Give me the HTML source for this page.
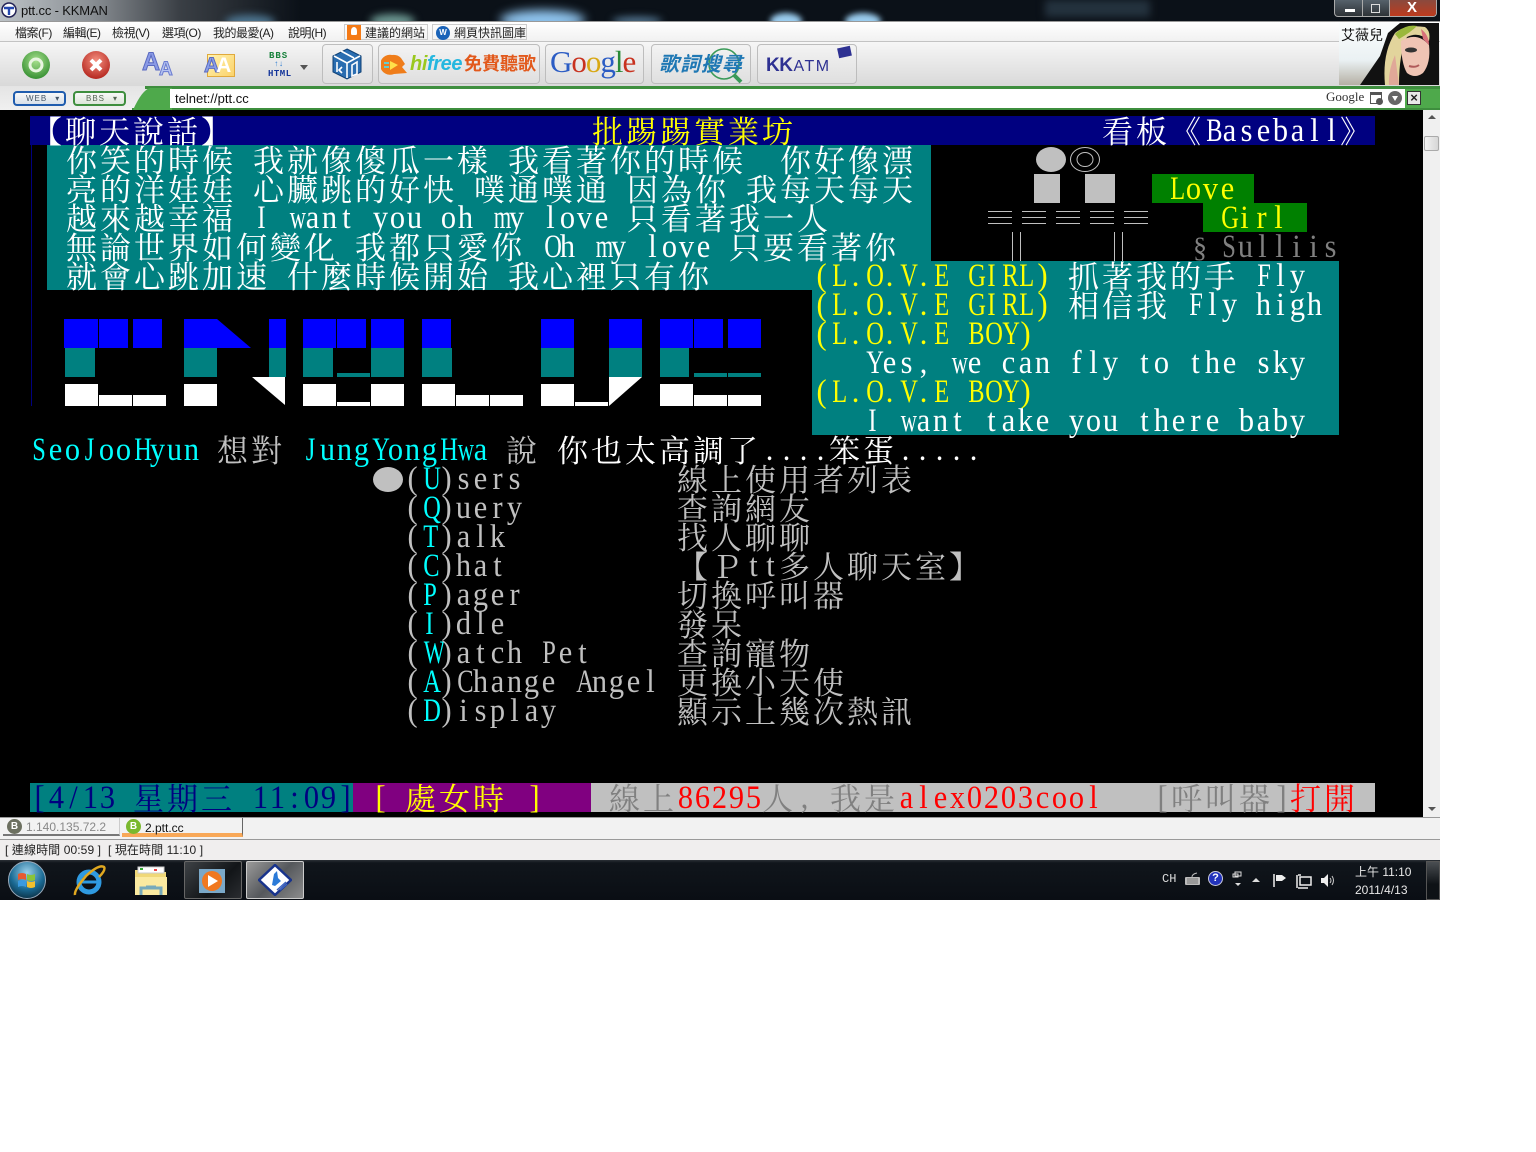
<!DOCTYPE html>
<html><head><meta charset="utf-8"><title>ptt.cc - KKMAN</title>
<style>
html,body{margin:0;padding:0;background:#fff;width:1536px;height:1152px;overflow:hidden}
#a{position:absolute;left:0;top:0;width:1440px;height:900px;overflow:hidden;font-family:"Liberation Sans","Noto Sans CJK TC",sans-serif;font-size:12px;color:#222}
.p{position:absolute}
.t{position:absolute;white-space:nowrap;line-height:16px}
.mn{letter-spacing:-.5px}
.r{position:absolute;white-space:nowrap;height:29px;line-height:29px;margin-top:2px;font-family:"Liberation Serif","Noto Serif CJK SC",serif;font-size:31px;letter-spacing:3px;color:#c0c0c0}
.r i,.r b,.r s,.r u{display:inline-block;position:relative;top:-2px;width:17px;text-align:center;font-style:normal;font-weight:normal;text-decoration:none;letter-spacing:0;font-size:33px;transform:scaleX(.92)}
.r b{transform:scaleX(.68)}
.r u{transform:scaleX(.74)}
.w{color:#fff}.y{color:#ff0}.c{color:#0ff}.d{color:#808080}.n{color:#000080}.e{color:#f00}
.btn{position:absolute;top:44px;height:38px;border:1px solid #bdbdbd;border-radius:4px;background:linear-gradient(#f3f3f3,#dfdfdf)}
.k{position:absolute;top:319px;height:29px;background:#00f}
.m{position:absolute;top:348px;height:29px;background:#008080}
.h{position:absolute;background:#fff}
.tb{position:absolute;top:861px;height:36px;width:56px;border:1px solid #666;border-radius:2px}
</style></head><body><div id="a">

<!-- title bar -->
<div class="p" style="left:0;top:0;width:1440px;height:21px;background:#0b1118;overflow:hidden">
<div class="p" style="left:0;top:0;width:300px;height:21px;background:linear-gradient(90deg,#bcc2c6,#8b9095 30%,#3a3f45 60%,#0b1118)"></div>
<div class="p" style="left:225px;top:15px;width:50px;height:14px;background:#4d7590;border-radius:50%;filter:blur(4px)"></div>
<div class="p" style="left:370px;top:14px;width:45px;height:14px;background:#6b9690;border-radius:50%;filter:blur(4px)"></div>
<div class="p" style="left:500px;top:10px;width:85px;height:20px;background:#8fc4ee;border-radius:50%;filter:blur(5px)"></div>
<div class="p" style="left:612px;top:17px;width:50px;height:8px;background:#5a7f9c;border-radius:50%;filter:blur(4px)"></div>
<div class="p" style="left:770px;top:13px;width:32px;height:16px;background:#9accee;border-radius:50%;filter:blur(3px)"></div>
<div class="p" style="left:845px;top:13px;width:36px;height:16px;background:#9accee;border-radius:50%;filter:blur(3px)"></div>
<div class="p" style="left:1045px;top:0;width:105px;height:17px;background:#24323e;filter:blur(4px)"></div>
</div>
<svg class="p" style="left:1px;top:2px" width="16" height="16" viewBox="0 0 16 16"><circle cx="8" cy="8" r="7" fill="#fff" stroke="#225" stroke-width="1.5"/><path d="M3 6h10M8 5v8" stroke="#2448b0" stroke-width="2.4"/></svg>
<div class="t" style="left:21px;top:3px;color:#111;font-size:13px;letter-spacing:-.15px">ptt.cc - KKMAN</div>
<div class="p" style="left:1334px;top:0;width:103px;height:17px;border:1px solid #aaa;border-top:0;border-radius:0 0 4px 4px;box-sizing:border-box;overflow:hidden;background:linear-gradient(#56616b,#2d3236)">
<div class="p" style="left:55px;top:0;width:47px;height:17px;background:linear-gradient(#8a4a3e,#c03a1c)"></div>
<div class="p" style="left:27px;top:0;width:1px;height:17px;background:#aaa"></div>
<div class="p" style="left:54px;top:0;width:1px;height:17px;background:#aaa"></div>
<div class="p" style="left:10px;top:9px;width:10px;height:3px;background:#fff"></div>
<div class="p" style="left:36px;top:4px;width:7px;height:7px;border:1.5px solid #ddd"></div>
<div class="p" style="left:72px;top:-1px;color:#fff;font-weight:bold;font-size:15px;line-height:17px">X</div>
</div>

<!-- menu bar -->
<div class="p" style="left:0;top:21px;width:1440px;height:21px;background:linear-gradient(#fff,#f1f1f1);border-top:1px solid #999;box-sizing:border-box;border-bottom:1px solid #c3c3c3"></div>
<div class="t mn" style="left:15px;top:25px">檔案(F)</div>
<div class="t mn" style="left:63px;top:25px">編輯(E)</div>
<div class="t mn" style="left:112px;top:25px">檢視(V)</div>
<div class="t mn" style="left:162px;top:25px">選項(O)</div>
<div class="t mn" style="left:213px;top:25px">我的最愛(A)</div>
<div class="t mn" style="left:288px;top:25px">說明(H)</div>
<div class="p" style="left:344px;top:24px;width:84px;height:16px;border:1px solid #ccc;box-sizing:border-box"></div>
<div class="p" style="left:347px;top:25px;width:14px;height:15px;background:#f47a16"></div>
<div class="p" style="left:351px;top:27px;width:6px;height:8px;background:#fff;border-radius:50% 50% 20% 20%"></div>
<div class="t" style="left:365px;top:25px">建議的網站</div>
<div class="p" style="left:432px;top:24px;width:95px;height:16px;border:1px solid #ccc;box-sizing:border-box"></div>
<div class="p" style="left:436px;top:26px;width:14px;height:14px;border-radius:50%;background:#1a63b8;color:#fff;font:bold 8px/14px 'Liberation Sans';text-align:center">W</div>
<div class="t" style="left:454px;top:25px">網頁快訊圖庫</div>

<!-- toolbar -->
<div class="p" style="left:0;top:42px;width:1440px;height:44px;background:linear-gradient(#f6f6f6,#d9d9d9)"></div>
<svg class="p" style="left:20px;top:49px" width="32" height="32"><defs><radialGradient id="gg" cx=".5" cy=".35" r=".7"><stop offset="0" stop-color="#a6e08c"/><stop offset="1" stop-color="#2f8a2c"/></radialGradient><radialGradient id="rr" cx=".5" cy=".35" r=".7"><stop offset="0" stop-color="#f59080"/><stop offset="1" stop-color="#b01f18"/></radialGradient></defs><circle cx="16" cy="16" r="14" fill="url(#gg)"/><circle cx="16" cy="16" r="6" fill="none" stroke="#e8f5e0" stroke-width="3"/></svg>
<svg class="p" style="left:81px;top:49px" width="32" height="32"><circle cx="15" cy="16" r="14" fill="url(#rr)"/><path d="M10 11l10 10M20 11l-10 10" stroke="#fff" stroke-width="4"/></svg>
<div class="t" style="left:142px;top:49px;font:bold 25px 'Liberation Sans';color:#8a9ae6;-webkit-text-stroke:1px #5a6ac0;line-height:26px">A</div>
<div class="t" style="left:159px;top:60px;font:bold 19px 'Liberation Sans';color:#b4c2f0;-webkit-text-stroke:1px #6a7bd0;line-height:20px">A</div>
<div class="p" style="left:207px;top:54px;width:28px;height:23px;background:linear-gradient(135deg,#fff3b0,#fbd26a);border:1px solid #e0a93c;box-sizing:border-box"></div>
<div class="t" style="left:204px;top:54px;font:bold 21px 'Liberation Sans';color:#8aa0e8;-webkit-text-stroke:1px #5a6ac0;line-height:24px">A<span style="color:#fff;-webkit-text-stroke:0;margin-left:-3px">A</span></div>
<div class="t" style="left:269px;top:51px;font:bold 9px 'Liberation Mono';color:#16803a;letter-spacing:1px;line-height:10px">BBS</div>
<div class="t" style="left:274px;top:60px;font:bold 8px 'Liberation Mono';color:#2a7ad0;line-height:9px">↑↓</div>
<div class="t" style="left:268px;top:69px;font:bold 9px 'Liberation Mono';color:#14359a;letter-spacing:.5px;line-height:10px">HTML</div>
<div class="p" style="left:300px;top:65px;width:0;height:0;border:4px solid transparent;border-top:5px solid #555"></div>

<div class="btn" style="left:322px;width:49px"></div>
<svg class="p" style="left:332px;top:48px" width="30" height="32" viewBox="0 0 30 32"><path d="M15 1l14 7v16l-14 7-14-7V8z" fill="#2a6db0" stroke="#0d3f74"/><path d="M15 15L2 8M15 15l13-7M15 15v15M9 3l13 7M5 14v10M10 19l-3 3 3 3M20 17l5-3v12l-5 2z" stroke="#fff" stroke-width="1.6" fill="none"/></svg>
<div class="btn" style="left:378px;width:160px"></div>
<svg class="p" style="left:381px;top:54px" width="27" height="22"><path d="M11 1a10 10 0 1 0 2 19l13-1-5-6 3-3-4-6A10 10 0 0 0 11 1z" fill="#ef7d1a"/><path d="M9 7l8 4-8 5z" fill="#ffe14a"/><path d="M3 9h5M3 13h5" stroke="#6cc" stroke-width="2"/></svg>
<div class="t" style="left:410px;top:51px;font:italic bold 20px 'Liberation Sans';line-height:26px;letter-spacing:-.4px;color:#9ac81e">hi<span style="color:#25b7df">free</span></div>
<div class="t" style="left:464px;top:54px;font:bold 18px 'Liberation Sans','Noto Sans CJK TC';line-height:20px;color:#e2591c">免費聽歌</div>
<div class="btn" style="left:545px;width:97px"></div>
<div class="t" style="left:550px;top:44px;font:31px 'Liberation Serif';line-height:36px;letter-spacing:-1px;color:#2b5cc4">G<span style="color:#c8321f">o</span><span style="color:#d8a814">o</span>g<span style="color:#2a8a38">l</span><span style="color:#c8321f">e</span></div>
<div class="btn" style="left:651px;width:98px"></div>
<svg class="p" style="left:708px;top:47px" width="36" height="37"><circle cx="16" cy="17" r="15" fill="none" stroke="#3a9a58" stroke-width="1.6"/><path d="M26 28l7 7" stroke="#3a9a58" stroke-width="4"/></svg>
<div class="t" style="left:659px;top:53px;font:italic bold 20px 'Liberation Sans','Noto Sans CJK TC';line-height:24px;letter-spacing:1px;color:#1f78b4">歌詞搜尋</div>
<div class="btn" style="left:757px;width:98px"></div>
<div class="t" style="left:766px;top:54px;font:bold 19px 'Liberation Sans';line-height:24px;color:#2e3192;letter-spacing:-.5px">KK<span style="font-size:16px;font-weight:normal;letter-spacing:1.5px;margin-left:1px">ATM</span></div>
<div class="p" style="left:838px;top:47px;width:13px;height:10px;background:#2e3192;transform:rotate(-12deg)"></div>

<!-- avatar -->
<svg class="p" style="left:1339px;top:23px" width="100" height="62" viewBox="0 0 100 62"><defs><linearGradient id="av" x1="0" y1="0" x2="0" y2="1"><stop offset="0" stop-color="#fbfdfd"/><stop offset=".6" stop-color="#eaf1f3"/><stop offset="1" stop-color="#b5b0a4"/></linearGradient></defs><rect width="100" height="62" fill="url(#av)"/><path d="M21 62L41 33 49 10 61 0H100V62z" fill="#111"/><path d="M46 62Q43 30 56 10 66 1 86 4 92 8 90 18 80 8 68 14 60 30 60 62z" fill="#e2d49c"/><path d="M56 11Q66 1 78 3 72 9 60 16z" fill="#9ab83c"/><path d="M50 62q-1-14 6-30l4 30z" fill="#e0a898"/><path d="M62 18Q78 8 90 22 92 40 84 50 76 56 68 50 62 40 62 18z" fill="#efc4b4"/><path d="M82 6q8 6 8 16l-6-6z" fill="#d8707a"/><ellipse cx="72" cy="27" rx="6" ry="2.5" fill="#333"/><path d="M70 43q6 2 10-1" stroke="#b05a5a" stroke-width="2" fill="none"/></svg>
<div class="t" style="left:1341px;top:27px;font-size:14px;color:#111">艾薇兒</div>

<!-- address bar -->
<div class="p" style="left:0;top:86px;width:1440px;height:24px;background:linear-gradient(#e4e4e4,#f0f0f0)"></div>
<div class="p" style="left:145px;top:86px;width:1295px;height:3px;background:#3e8e3e"></div>
<div class="p" style="left:132px;top:108px;width:1308px;height:2px;background:#3e8e3e"></div>
<svg class="p" style="left:130px;top:86px" width="42" height="24"><path d="M3 24Q12 4 20 2h22v22z" fill="#4ea94b"/></svg>
<div class="p" style="left:170px;top:89px;width:1235px;height:19px;background:#fff"></div>
<div class="p" style="left:1405px;top:89px;width:35px;height:19px;background:#4ea94b"></div>
<div class="t" style="left:175px;top:91px;color:#111;font-size:13px">telnet://ptt.cc</div>
<div class="p" style="left:13px;top:91px;width:53px;height:15px;border:2px solid #1f5cae;border-radius:4px;box-sizing:border-box;background:linear-gradient(#f8f8f8,#d8e0ea);font:8px/11px 'Liberation Sans';color:#456;text-align:left;padding-left:11px;letter-spacing:1px">WEB<span style="margin-left:8px">▾</span></div>
<div class="p" style="left:73px;top:91px;width:53px;height:15px;border:2px solid #3e8e3e;border-radius:4px;box-sizing:border-box;background:linear-gradient(#f8f8f8,#dde6da);font:8px/11px 'Liberation Sans';color:#565;text-align:left;padding-left:11px;letter-spacing:1px">BBS<span style="margin-left:8px">▾</span></div>
<div class="t" style="left:1326px;top:89px;font:13px/16px 'Liberation Serif';color:#333">Google</div>
<div class="p" style="left:1370px;top:92px;width:12px;height:12px;background:#fff;border:1px solid #555;border-top-width:3px;box-sizing:border-box"></div>
<div class="p" style="left:1376px;top:98px;width:7px;height:7px;background:#555;border-radius:50%"></div>
<div class="p" style="left:1388px;top:91px;width:14px;height:14px;background:#666;border-radius:50%"></div>
<div class="p" style="left:1392px;top:96px;width:0;height:0;border:3px solid transparent;border-top:5px solid #fff"></div>
<div class="p" style="left:1407px;top:91px;width:14px;height:14px;background:#e8e8e8;border:1px solid #333;box-sizing:border-box;font:bold 13px/12px 'Liberation Sans';text-align:center;color:#222">×</div>

<!-- terminal -->
<div class="p" style="left:0;top:110px;width:1423px;height:707px;background:#000"></div>
<div class="p" style="left:1423px;top:110px;width:17px;height:707px;background:#f0f0f0"></div>
<div class="p" style="left:1428px;top:115px;width:0;height:0;border:4px solid transparent;border-bottom:4px solid #555;border-top:0"></div>
<div class="p" style="left:1428px;top:807px;width:0;height:0;border:4px solid transparent;border-top:4px solid #555;border-bottom:0"></div>
<div class="p" style="left:1424px;top:136px;width:15px;height:15px;background:linear-gradient(90deg,#f3f3f3,#d6d6d6);border:1px solid #aaa;box-sizing:border-box;border-radius:2px"></div>

<!-- backgrounds -->
<div class="p" style="left:30px;top:116px;width:1345px;height:29px;background:#000080"></div>
<div class="p" style="left:47px;top:145px;width:884px;height:116px;background:#008080"></div>
<div class="p" style="left:47px;top:261px;width:765px;height:29px;background:#008080"></div>
<div class="p" style="left:812px;top:261px;width:527px;height:174px;background:#008080"></div>
<div class="p" style="left:31px;top:145px;width:1px;height:261px;background:#000080"></div>
<div class="p" style="left:1152px;top:174px;width:102px;height:29px;background:#008000"></div>
<div class="p" style="left:1203px;top:203px;width:104px;height:29px;background:#008000"></div>
<div class="p" style="left:30px;top:783px;width:323px;height:29px;background:#008080"></div>
<div class="p" style="left:353px;top:783px;width:238px;height:29px;background:#800080"></div>
<div class="p" style="left:591px;top:783px;width:784px;height:29px;background:#c0c0c0"></div>

<!-- row 0 -->
<div class="r w" style="left:31px;top:116px">【聊天說話】</div>
<div class="r y" style="left:592px;top:116px">批踢踢實業坊</div>
<div class="r w" style="left:1102px;top:116px">看板《<u>B</u><i>a</i><i>s</i><i>e</i><i>b</i><i>a</i><i>l</i><i>l</i>》</div>

<!-- lyrics -->
<div class="r w" style="left:66px;top:145px">你笑的時候<s></s>我就像傻瓜一樣<s></s>我看著你的時候<s></s><s></s>你好像漂</div>
<div class="r w" style="left:66px;top:174px">亮的洋娃娃<s></s>心臟跳的好快<s></s>噗通噗通<s></s>因為你<s></s>我每天每天</div>
<div class="r w" style="left:66px;top:203px">越來越幸福<s></s><u>I</u><s></s><b>w</b><i>a</i><i>n</i><i>t</i><s></s><i>y</i><i>o</i><i>u</i><s></s><i>o</i><i>h</i><s></s><b>m</b><i>y</i><s></s><i>l</i><i>o</i><i>v</i><i>e</i><s></s>只看著我一人</div>
<div class="r w" style="left:66px;top:232px">無論世界如何變化<s></s>我都只愛你<s></s><u>O</u><i>h</i><s></s><b>m</b><i>y</i><s></s><i>l</i><i>o</i><i>v</i><i>e</i><s></s>只要看著你</div>
<div class="r w" style="left:66px;top:261px">就會心跳加速<s></s>什麼時候開始<s></s>我心裡只有你</div>

<!-- right art -->
<div class="p" style="left:1036px;top:147px;width:30px;height:25px;background:#c0c0c0;border-radius:50%"></div>
<svg class="p" style="left:1069px;top:146px" width="32" height="27"><ellipse cx="16" cy="13.5" rx="14.5" ry="12" fill="none" stroke="#c0c0c0"/><ellipse cx="16" cy="13.5" rx="8" ry="7" fill="none" stroke="#c0c0c0"/></svg>
<div class="p" style="left:1034px;top:174px;width:26px;height:29px;background:#c0c0c0"></div>
<div class="p" style="left:1085px;top:174px;width:30px;height:29px;background:#c0c0c0"></div>
<div class="r y" style="left:1168px;top:174px"><u>L</u><i>o</i><i>v</i><i>e</i></div>
<div class="r y" style="left:1219px;top:203px"><u>G</u><i>i</i><i>r</i><i>l</i></div>
<svg class="p" style="left:988px;top:211px" width="162" height="13"><g stroke="#c0c0c0"><path d="M0 .5h24M34 .5h24M68 .5h24M102 .5h24M136 .5h24M0 6.5h24M34 6.5h24M68 6.5h24M102 6.5h24M136 6.5h24M0 12.5h24M34 12.5h24M68 12.5h24M102 12.5h24M136 12.5h24"/></g></svg>
<svg class="p" style="left:1010px;top:232px" width="116" height="29"><g stroke="#c0c0c0"><path d="M2.500 0v29M10.500 0v29M104.500 0v29M112.500 0v29"/></g></svg>
<div class="r d" style="left:1193px;top:232px;font-size:28px">§</div>
<div class="r d" style="left:1220px;top:232px"><u>S</u><i>u</i><i>l</i><i>l</i><i>i</i><i>i</i><i>s</i></div>

<!-- right teal -->
<div class="r" style="left:813px;top:261px"><span class="y"><i>(</i><u>L</u><i>.</i><u>O</u><i>.</i><u>V</u><i>.</i><u>E</u><s></s><u>G</u><u>I</u><u>R</u><u>L</u><i>)</i></span><s></s><span class="w">抓著我的手<s></s><u>F</u><i>l</i><i>y</i></span></div>
<div class="r" style="left:813px;top:290px"><span class="y"><i>(</i><u>L</u><i>.</i><u>O</u><i>.</i><u>V</u><i>.</i><u>E</u><s></s><u>G</u><u>I</u><u>R</u><u>L</u><i>)</i></span><s></s><span class="w">相信我<s></s><u>F</u><i>l</i><i>y</i><s></s><i>h</i><i>i</i><i>g</i><i>h</i></span></div>
<div class="r y" style="left:813px;top:319px"><i>(</i><u>L</u><i>.</i><u>O</u><i>.</i><u>V</u><i>.</i><u>E</u><s></s><u>B</u><u>O</u><u>Y</u><i>)</i></div>
<div class="r w" style="left:864px;top:348px"><u>Y</u><i>e</i><i>s</i><i>,</i><s></s><b>w</b><i>e</i><s></s><i>c</i><i>a</i><i>n</i><s></s><i>f</i><i>l</i><i>y</i><s></s><i>t</i><i>o</i><s></s><i>t</i><i>h</i><i>e</i><s></s><i>s</i><i>k</i><i>y</i></div>
<div class="r y" style="left:813px;top:377px"><i>(</i><u>L</u><i>.</i><u>O</u><i>.</i><u>V</u><i>.</i><u>E</u><s></s><u>B</u><u>O</u><u>Y</u><i>)</i></div>
<div class="r w" style="left:864px;top:406px"><u>I</u><s></s><b>w</b><i>a</i><i>n</i><i>t</i><s></s><i>t</i><i>a</i><i>k</i><i>e</i><s></s><i>y</i><i>o</i><i>u</i><s></s><i>t</i><i>h</i><i>e</i><i>r</i><i>e</i><s></s><i>b</i><i>a</i><i>b</i><i>y</i></div>

<!-- block letters -->
<div class="k" style="left:64px;width:34px"></div><div class="k" style="left:99px;width:29px"></div><div class="k" style="left:133px;width:29px"></div>
<div class="m" style="left:65px;width:30px"></div>
<div class="h" style="left:65px;top:384px;width:33px;height:22px"></div><div class="h" style="left:99px;top:395px;width:33px;height:11px"></div><div class="h" style="left:133px;top:395px;width:33px;height:11px"></div>
<div class="k" style="left:184px;width:33px"></div><div class="m" style="left:184px;width:33px"></div><div class="h" style="left:184px;top:384px;width:33px;height:22px"></div>
<div class="k" style="left:269px;width:17px"></div><div class="m" style="left:269px;width:17px"></div>
<div class="k" style="left:303px;width:33px"></div><div class="k" style="left:337px;width:29px"></div><div class="k" style="left:371px;width:33px"></div>
<div class="m" style="left:303px;width:30px"></div><div class="m" style="left:337px;top:373px;height:4px;width:33px"></div><div class="m" style="left:371px;width:33px"></div>
<div class="h" style="left:303px;top:384px;width:33px;height:22px"></div><div class="h" style="left:337px;top:402px;width:33px;height:4px"></div><div class="h" style="left:371px;top:384px;width:33px;height:22px"></div>
<div class="k" style="left:422px;width:29px"></div><div class="m" style="left:422px;width:30px"></div>
<div class="h" style="left:422px;top:384px;width:33px;height:22px"></div><div class="h" style="left:456px;top:395px;width:33px;height:11px"></div><div class="h" style="left:490px;top:395px;width:33px;height:11px"></div>
<div class="k" style="left:541px;width:33px"></div><div class="m" style="left:541px;width:33px"></div><div class="h" style="left:541px;top:384px;width:33px;height:22px"></div><div class="h" style="left:575px;top:402px;width:33px;height:4px"></div>
<div class="k" style="left:609px;width:33px"></div><div class="m" style="left:609px;width:33px"></div>
<div class="k" style="left:660px;width:33px"></div><div class="k" style="left:694px;width:29px"></div><div class="k" style="left:728px;width:33px"></div>
<div class="m" style="left:660px;width:29px"></div><div class="m" style="left:694px;top:373px;height:4px;width:33px"></div><div class="m" style="left:728px;top:373px;height:4px;width:33px"></div>
<div class="h" style="left:660px;top:384px;width:33px;height:22px"></div><div class="h" style="left:694px;top:395px;width:33px;height:11px"></div><div class="h" style="left:728px;top:395px;width:33px;height:11px"></div>
<svg class="p" style="left:0;top:300px" width="700" height="110"><path d="M217 19L251 48H217z" fill="#00f"/><path d="M252 77h33v28z" fill="#fff"/><path d="M609 77h33L609 106z" fill="#fff"/></svg>

<!-- message line -->
<div class="r" style="left:30px;top:435px"><span class="c"><u>S</u><i>e</i><i>o</i><u>J</u><i>o</i><i>o</i><u>H</u><i>y</i><i>u</i><i>n</i></span><s></s>想對<s></s><span class="c"><u>J</u><i>u</i><i>n</i><i>g</i><u>Y</u><i>o</i><i>n</i><i>g</i><u>H</u><b>w</b><i>a</i></span><s></s>說<s></s><span class="w">你也太高調了<i>.</i><i>.</i><i>.</i><i>.</i>笨蛋<i>.</i><i>.</i><i>.</i><i>.</i><i>.</i></span></div>

<!-- menu -->
<div class="p" style="left:373px;top:467px;width:30px;height:25px;background:#c0c0c0;border-radius:50%"></div>
<div class="r" style="left:404px;top:464px"><i>(</i><span class="c"><u>U</u></span><i>)</i><i>s</i><i>e</i><i>r</i><i>s</i></div>
<div class="r" style="left:677px;top:464px">線上使用者列表</div>
<div class="r" style="left:404px;top:493px"><i>(</i><span class="c"><u>Q</u></span><i>)</i><i>u</i><i>e</i><i>r</i><i>y</i></div>
<div class="r" style="left:677px;top:493px">查詢網友</div>
<div class="r" style="left:404px;top:522px"><i>(</i><span class="c"><u>T</u></span><i>)</i><i>a</i><i>l</i><i>k</i></div>
<div class="r" style="left:677px;top:522px">找人聊聊</div>
<div class="r" style="left:404px;top:551px"><i>(</i><span class="c"><u>C</u></span><i>)</i><i>h</i><i>a</i><i>t</i></div>
<div class="r" style="left:677px;top:551px">【Ｐ<i>t</i><i>t</i>多人聊天室】</div>
<div class="r" style="left:404px;top:580px"><i>(</i><span class="c"><u>P</u></span><i>)</i><i>a</i><i>g</i><i>e</i><i>r</i></div>
<div class="r" style="left:677px;top:580px">切換呼叫器</div>
<div class="r" style="left:404px;top:609px"><i>(</i><span class="c"><u>I</u></span><i>)</i><i>d</i><i>l</i><i>e</i></div>
<div class="r" style="left:677px;top:609px">發呆</div>
<div class="r" style="left:404px;top:638px"><i>(</i><span class="c"><b>W</b></span><i>)</i><i>a</i><i>t</i><i>c</i><i>h</i><s></s><u>P</u><i>e</i><i>t</i></div>
<div class="r" style="left:677px;top:638px">查詢寵物</div>
<div class="r" style="left:404px;top:667px"><i>(</i><span class="c"><u>A</u></span><i>)</i><u>C</u><i>h</i><i>a</i><i>n</i><i>g</i><i>e</i><s></s><u>A</u><i>n</i><i>g</i><i>e</i><i>l</i></div>
<div class="r" style="left:677px;top:667px">更換小天使</div>
<div class="r" style="left:404px;top:696px"><i>(</i><span class="c"><u>D</u></span><i>)</i><i>i</i><i>s</i><i>p</i><i>l</i><i>a</i><i>y</i></div>
<div class="r" style="left:677px;top:696px">顯示上幾次熱訊</div>

<!-- status row -->
<div class="r n" style="left:31px;top:783px"><i>[</i><i>4</i><i>/</i><i>1</i><i>3</i><s></s>星期三<s></s><i>1</i><i>1</i><i>:</i><i>0</i><i>9</i><i>]</i></div>
<div class="r y" style="left:372px;top:783px"><i>[</i></div>
<div class="r y" style="left:405px;top:783px">處女時</div>
<div class="r y" style="left:526px;top:783px"><i>]</i></div>
<div class="r d" style="left:609px;top:783px">線上<span class="e"><i>8</i><i>6</i><i>2</i><i>9</i><i>5</i></span>人<i>,</i><s></s>我是<span class="e"><i>a</i><i>l</i><i>e</i><i>x</i><i>0</i><i>2</i><i>0</i><i>3</i><i>c</i><i>o</i><i>o</i><i>l</i></span></div>
<div class="r d" style="left:1154px;top:783px"><i>[</i>呼叫器<i>]</i><span class="e">打開</span></div>

<!-- tabs -->
<div class="p" style="left:0;top:817px;width:1440px;height:22px;background:#f2f2f2;border-top:1px solid #999;box-sizing:border-box"></div>
<div class="p" style="left:0;top:839px;width:1440px;height:1px;background:#9a9a9a"></div>
<div class="p" style="left:3px;top:818px;width:117px;height:18px;border-bottom:2px solid #777;border-right:1px solid #ccc;box-sizing:border-box"></div>
<div class="p" style="left:122px;top:818px;width:121px;height:19px;border-bottom:4px solid #f8a858;border-right:1px solid #666;box-sizing:border-box"></div>
<div class="p" style="left:7px;top:819px;width:15px;height:15px;border-radius:50%;background:#6c7060;color:#fff;font:bold 10px/15px 'Liberation Sans';text-align:center">B</div>
<div class="t" style="left:26px;top:819px;color:#888">1.140.135.72.2</div>
<div class="p" style="left:126px;top:819px;width:15px;height:15px;border-radius:50%;background:#7ab82e;color:#fff;font:bold 10px/15px 'Liberation Sans';text-align:center">B</div>
<div class="t" style="left:145px;top:820px;color:#111">2.ptt.cc</div>
<div class="p" style="left:0;top:840px;width:1440px;height:20px;background:#f0eeee"></div>
<div class="t" style="left:5px;top:842px;color:#222;letter-spacing:.1px">[ 連線時間 00:59 ]&nbsp; [ 現在時間 11:10 ]</div>

<!-- taskbar -->
<div class="p" style="left:0;top:860px;width:1440px;height:40px;background:linear-gradient(#2a3036 0,#10151b 3px,#0a0e14 100%)"></div>
<svg class="p" style="left:7px;top:861px" width="40" height="38"><defs><radialGradient id="orb" cx=".5" cy=".3" r=".75"><stop offset="0" stop-color="#9ad0ea"/><stop offset=".6" stop-color="#1a6a94"/><stop offset="1" stop-color="#0a2a3c"/></radialGradient></defs><circle cx="20" cy="19" r="18.500" fill="url(#orb)" stroke="#9ab"/><path d="M11 13q4-2 8 0v6q-4-2-8 0z" fill="#e85a30"/><path d="M20 13q4 2 8 0v6q-4 2-8 0z" fill="#8ac43a"/><path d="M11 20q4-2 8 0v6q-4-2-8 0z" fill="#3a9ae0"/><path d="M20 20q4 2 8 0v6q-4 2-8 0z" fill="#f2c02e"/></svg>
<svg class="p" style="left:72px;top:864px" width="34" height="34"><circle cx="17" cy="18" r="10" fill="none" stroke="#2f9ae0" stroke-width="5"/><path d="M8 18h18" stroke="#2f9ae0" stroke-width="3"/><path d="M3 31Q2 26 14 12 27 0 32 3 34 6 27 13" fill="none" stroke="#e0a820" stroke-width="2.500"/></svg>
<svg class="p" style="left:134px;top:865px" width="34" height="31"><path d="M1 5h12l2 2h17v23H1z" fill="#f0d878"/><path d="M4 2h26v6H4z" fill="#fff" stroke="#ccc"/><rect x="6" y="3" width="3" height="2" fill="#3a3"/><rect x="20" y="4" width="3" height="2" fill="#e44"/><path d="M1 12h32v18H1z" fill="#fbeaa0"/><path d="M7 30v-7h20v7M12 22h10" stroke="#7ab" stroke-width="3" fill="none"/></svg>
<div class="tb" style="left:184px;background:linear-gradient(135deg,#3e4246,#121518 60%,#2a2c30)"></div>
<svg class="p" style="left:197px;top:867px" width="32" height="28"><rect x="2" y="2" width="26" height="24" fill="#7aa8c8"/><circle cx="15" cy="14" r="10" fill="#f07820"/><path d="M11 8l10 6-10 6z" fill="#fff"/></svg>
<div class="tb" style="left:246px;background:linear-gradient(135deg,#9a9a9a,#55585c 50%,#8c8c8c);border-color:#ccc"></div>
<svg class="p" style="left:258px;top:864px" width="34" height="32"><path d="M17 1l16 15-16 15L1 16z" fill="#fff" stroke="#18338c" stroke-width="2.500" stroke-linejoin="round"/><path d="M14 21l2-11 3-3 1 7 3 3-6 5z" fill="#2b7ad8"/><path d="M19 26l9-8M22 26l7-6" stroke="#3a62c0" stroke-width="1.500"/></svg>
<div class="t" style="left:1162px;top:871px;font:12px/16px 'Liberation Mono';color:#ddd">CH</div>
<svg class="p" style="left:1184px;top:871px" width="17" height="15"><rect x="1" y="6" width="15" height="8" fill="#bbb" rx="1"/><path d="M3 8h11M3 10h11M3 12h11" stroke="#777"/><path d="M8 6Q8 3 13 2" stroke="#bbb" fill="none"/></svg>
<div class="p" style="left:1208px;top:871px;width:15px;height:15px;border-radius:50%;background:#2233bb;border:1px solid #ccd;box-sizing:border-box;color:#fff;font:bold 11px/13px 'Liberation Sans';text-align:center">?</div>
<svg class="p" style="left:1232px;top:869px" width="12" height="20"><path d="M3 3h6v4H3zM1 5h5v3H1z" fill="none" stroke="#ddd"/><path d="M3 14h6l-3 3z" fill="#ddd"/></svg>
<div class="p" style="left:1252px;top:878px;width:0;height:0;border:4px solid transparent;border-bottom:4px solid #ddd;border-top:0"></div>
<svg class="p" style="left:1272px;top:873px" width="16" height="15"><path d="M2 1v13" stroke="#eee" stroke-width="1.500"/><path d="M4 2h6l4 3-4 3H4z" fill="#eee"/></svg>
<svg class="p" style="left:1296px;top:873px" width="16" height="16"><rect x="4" y="4" width="11" height="8" fill="none" stroke="#eee" stroke-width="1.500"/><path d="M1 2v13M2 2h3M2 15h10" stroke="#eee" stroke-width="1.500"/></svg>
<svg class="p" style="left:1320px;top:873px" width="16" height="15"><path d="M1 5h3l4-4v13l-4-4H1z" fill="#eee"/><path d="M10 5q2 2.500 0 5M12 3q3 4.500 0 9" stroke="#ccc" fill="none"/></svg>
<div class="t" style="left:1355px;top:864px;color:#e8e8e8;font-size:12px">上午 11:10</div>
<div class="t" style="left:1355px;top:882px;color:#e8e8e8;font-size:12px">2011/4/13</div>
<div class="p" style="left:1426px;top:861px;width:14px;height:39px;border:1px solid #555;box-sizing:border-box;background:linear-gradient(#4a4e52,#0e1216 60%)"></div>

</div></body></html>
